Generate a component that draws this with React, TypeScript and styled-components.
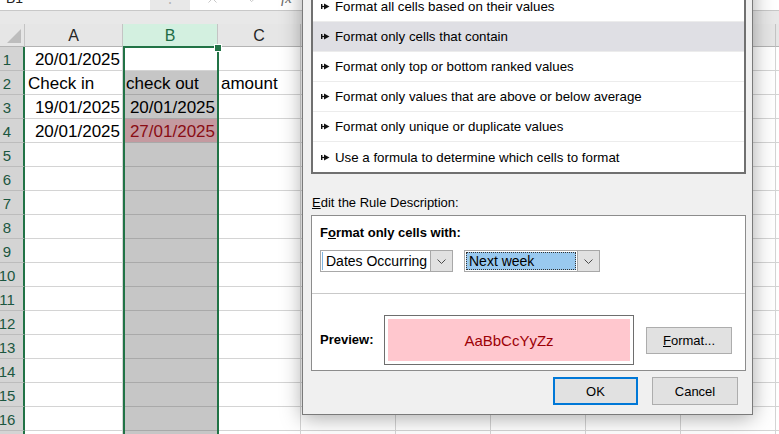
import React from "react";
import styled, { createGlobalStyle } from "styled-components";
import { X, Check } from "lucide-react";

const GlobalStyle = createGlobalStyle`
  html, body {
    margin: 0;
    padding: 0;
    overflow: hidden;
    background: #ffffff;
  }
  body {
    font-family: "Liberation Sans", Arial, sans-serif;
  }
`;

const Window = styled.div`
  position: relative;
  width: 779px;
  height: 434px;
  overflow: hidden;
  background: #e8e8e8;
`;

/* ---------- formula bar ---------- */

const FormulaBar = styled.div`
  display: flex;
  height: 24px;
  margin-top: -14px;
  border-bottom: 1px solid #c8c8c8;
  background: #e8e8e8;
`;

const NameBox = styled.div`
  width: 150px;
  display: flex;
  align-items: center;
  padding-left: 6px;
  box-sizing: border-box;
  background: #ffffff;
  font-size: 14px;
  color: #222;
`;

const Grip = styled.div`
  width: 40px;
  display: flex;
  align-items: center;
  justify-content: center;
  color: #b4b4b4;
  font-size: 14px;
`;

const FormulaInput = styled.div`
  flex: 1;
  display: flex;
  align-items: center;
  gap: 26px;
  padding-left: 15px;
  background: #ffffff;
  color: #c4c4c4;
`;

const Fx = styled.span`
  font-family: "Liberation Serif", serif;
  font-style: italic;
  font-size: 15px;
  color: #666;
  margin-left: -6px;
`;

/* ---------- sheet ---------- */

const Sheet = styled.div`
  position: relative;
  display: grid;
  grid-template-columns: 25px 98px 95px 83px repeat(6, 95px);
  grid-template-rows: 23px;
  grid-auto-rows: 24px;
  margin-top: 13px;
  font-size: 17px;
`;

const Corner = styled.div`
  position: relative;
  background: #e6e6e6;
  border-right: 1px solid #c4c4c4;
  border-bottom: 1px solid #b4b4b4;

  &::after {
    content: "";
    position: absolute;
    right: 3px;
    bottom: 3px;
    border-left: 14px solid transparent;
    border-bottom: 14px solid #bdbdbd;
  }
`;

const ColHead = styled.div<{ $active?: boolean }>`
  display: flex;
  align-items: center;
  justify-content: center;
  padding-top: 1px;
  box-sizing: border-box;
  background: ${(p) => (p.$active ? "#d3f0e0" : "#e6e6e6")};
  color: ${(p) => (p.$active ? "#1d6b45" : "#262626")};
  border-right: 1px solid #c4c4c4;
  border-bottom: 1px solid #b4b4b4;
  font-size: 16px;
`;

const RowHead = styled.div`
  display: flex;
  align-items: center;
  justify-content: center;
  padding: 2px 9px 0 0;
  box-sizing: border-box;
  background: #d4d4d4;
  color: #1b5740;
  border-right: 2px solid #217346;
  border-bottom: 1px solid #bcbcbc;
  font-size: 15px;
`;

type Tone = "plain" | "sel" | "hit";

const Cell = styled.div<{ $tone: Tone; $right?: boolean }>`
  display: flex;
  align-items: center;
  justify-content: ${(p) => (p.$right ? "flex-end" : "flex-start")};
  padding: 3px 2px 0 3px;
  box-sizing: border-box;
  white-space: nowrap;
  overflow: hidden;
  color: ${(p) => (p.$tone === "hit" ? "#8a0d14" : "#000")};
  background: ${(p) =>
    p.$tone === "sel" ? "#c6c6c6" : p.$tone === "hit" ? "#c49aa0" : "#ffffff"};
  border-right: 1px solid #d4d4d4;
  border-bottom: 1px solid
    ${(p) => (p.$tone === "plain" ? "#d4d4d4" : "#a9a9a9")};
`;

const Selection = styled.div`
  position: absolute;
  left: 123px;
  top: 22px;
  width: 96px;
  bottom: -40px;
  border: 2px solid #217346;
  box-sizing: border-box;
  pointer-events: none;

  &::after {
    content: "";
    position: absolute;
    right: -5px;
    top: -4px;
    width: 6px;
    height: 6px;
    background: #217346;
    border: 1px solid #fff;
  }
`;

/* ---------- dialog ---------- */

const Dialog = styled.div`
  position: absolute;
  left: 302px;
  top: -40px;
  width: 451px;
  box-sizing: border-box;
  padding: 29px 6px 9px 8px;
  background: #f0f0f0;
  border: 1px solid #7a7a7a;
  box-shadow: 0 3px 20px rgba(0, 0, 0, 0.34);
  font-size: 13px;
  color: #000;
`;

const RuleList = styled.div`
  display: flex;
  flex-direction: column;
  background: #ffffff;
  border: 2px solid #707070;
`;

const RuleItem = styled.div<{ $selected?: boolean }>`
  display: flex;
  align-items: center;
  gap: 5px;
  height: 30px;
  padding: 0 8px;
  box-sizing: border-box;
  background: ${(p) => (p.$selected ? "#dfdfe4" : "#ffffff")};
  border-bottom: 1px solid #ececec;
  font-size: 13.3px;

  &:last-child {
    border-bottom: none;
  }
`;

const SectionLabel = styled.div`
  margin: 21px 0 4px 1px;
  line-height: 16px;
`;

const RuleBox = styled.div`
  display: flex;
  flex-direction: column;
  background: #ffffff;
  border: 1px solid #8c8c8c;
`;

const RuleTop = styled.div`
  height: 78px;
  box-sizing: border-box;
  padding: 9px 8px 0;
  border-bottom: 1px solid #c9c9c9;
`;

const BoldLabel = styled.div<{ $width?: number }>`
  font-weight: bold;
  line-height: 16px;
  width: ${(p) => (p.$width ? `${p.$width}px` : "auto")};
`;

const ComboRow = styled.div`
  display: flex;
  gap: 11px;
  margin-top: 9px;
`;

const Combo = styled.div<{ $width: number }>`
  display: flex;
  width: ${(p) => p.$width}px;
  height: 22px;
  box-sizing: border-box;
  border: 1px solid #a8a8a8;
  background: #ffffff;
`;

const ComboText = styled.div<{ $focused?: boolean }>`
  flex: 1;
  display: flex;
  align-items: center;
  margin: 1px;
  padding-left: 3px;
  background: ${(p) => (p.$focused ? "#99c9ef" : "transparent")};
  outline: ${(p) => (p.$focused ? "1px dotted #333" : "none")};
  outline-offset: -1px;
  border-left: ${(p) => (p.$focused ? "none" : "1px solid #7fb4e0")};
  font-size: 14px;
`;

const ComboButton = styled.div`
  width: 21px;
  display: flex;
  align-items: center;
  justify-content: center;
  background: #e1e1e1;
  border-left: 1px solid #a8a8a8;
`;

const RuleBottom = styled.div`
  display: flex;
  align-items: center;
  height: 76px;
  box-sizing: border-box;
  padding: 21px 8px 5px;
`;

const Preview = styled.div`
  width: 250px;
  height: 50px;
  box-sizing: border-box;
  padding: 3px;
  border: 1px solid #6e6e6e;
  background: #ffffff;
  margin-right: 12px;
`;

const PreviewFill = styled.div`
  height: 100%;
  display: flex;
  align-items: center;
  justify-content: center;
  background: #ffc7ce;
  color: #9c0006;
  font-size: 15px;
`;

const Button = styled.button<{ $primary?: boolean; $width: number; $height: number }>`
  width: ${(p) => p.$width}px;
  height: ${(p) => p.$height}px;
  padding: 0;
  box-sizing: border-box;
  background: #e1e1e1;
  border: ${(p) => (p.$primary ? "2px solid #0078d7" : "1px solid #adadad")};
  font-family: "Liberation Sans", Arial, sans-serif;
  font-size: 13px;
  color: #000;
`;

const ButtonRow = styled.div`
  display: flex;
  justify-content: flex-end;
  gap: 14px;
  margin: 6px 8px 0 0;
`;

const RuleArrow = () => (
  <svg width="9" height="7" viewBox="0 0 9 7">
    <rect x="0" y="1" width="1.4" height="5" fill="#111" />
    <path d="M1 3.5h3" stroke="#111" strokeWidth="1.2" />
    <path d="M3 0.5L8.5 3.5L3 6.5Z" fill="#111" />
  </svg>
);

const Chevron = () => (
  <svg width="9" height="5" viewBox="0 0 9 5">
    <path d="M0.5 0.5L4.5 4.5L8.5 0.5" stroke="#4a4a4a" fill="none" />
  </svg>
);

const rules = [
  "Format all cells based on their values",
  "Format only cells that contain",
  "Format only top or bottom ranked values",
  "Format only values that are above or below average",
  "Format only unique or duplicate values",
  "Use a formula to determine which cells to format",
];

type Row = { a?: string; aRight?: boolean; b?: string; bRight?: boolean; c?: string };

const data: Row[] = [
  { a: "20/01/2025", aRight: true },
  { a: "Check in", b: "check out", c: "amount" },
  { a: "19/01/2025", aRight: true, b: "20/01/2025", bRight: true },
  { a: "20/01/2025", aRight: true, b: "27/01/2025", bRight: true },
];

const columns = ["A", "B", "C", "D", "E", "F", "G", "H", "I"];

const App = () => {
  const rows = Array.from({ length: 17 }, (_, i) => data[i] || {});

  return (
    <>
      <GlobalStyle />
      <Window>
        <FormulaBar>
          <NameBox>B1</NameBox>
          <Grip>⋮</Grip>
          <FormulaInput>
            <X size={15} strokeWidth={1.5} />
            <Check size={15} strokeWidth={1.5} />
            <Fx>fx</Fx>
          </FormulaInput>
        </FormulaBar>

        <Sheet>
          <Corner />
          {columns.map((c) => (
            <ColHead key={c} $active={c === "B"}>
              {c}
            </ColHead>
          ))}
          {rows.map((r, i) => {
            const bTone: Tone = i === 0 ? "plain" : i === 3 ? "hit" : "sel";
            return (
              <React.Fragment key={i}>
                <RowHead>{i + 1}</RowHead>
                <Cell $tone="plain" $right={r.aRight}>
                  {r.a}
                </Cell>
                <Cell $tone={bTone} $right={r.bRight}>
                  {r.b}
                </Cell>
                <Cell $tone="plain">{r.c}</Cell>
                {columns.slice(3).map((c) => (
                  <Cell key={c} $tone="plain" />
                ))}
              </React.Fragment>
            );
          })}
          <Selection />
        </Sheet>

        <Dialog>
          <RuleList>
            {rules.map((r, i) => (
              <RuleItem key={r} $selected={i === 1}>
                <RuleArrow />
                <span>{r}</span>
              </RuleItem>
            ))}
          </RuleList>

          <SectionLabel>
            <u>E</u>dit the Rule Description:
          </SectionLabel>

          <RuleBox>
            <RuleTop>
              <BoldLabel>
                F<u>o</u>rmat only cells with:
              </BoldLabel>
              <ComboRow>
                <Combo $width={133}>
                  <ComboText>Dates Occurring</ComboText>
                  <ComboButton>
                    <Chevron />
                  </ComboButton>
                </Combo>
                <Combo $width={136}>
                  <ComboText $focused>Next week</ComboText>
                  <ComboButton>
                    <Chevron />
                  </ComboButton>
                </Combo>
              </ComboRow>
            </RuleTop>
            <RuleBottom>
              <BoldLabel $width={64}>Preview:</BoldLabel>
              <Preview>
                <PreviewFill>AaBbCcYyZz</PreviewFill>
              </Preview>
              <Button $width={86} $height={27}>
                <u>F</u>ormat...
              </Button>
            </RuleBottom>
          </RuleBox>

          <ButtonRow>
            <Button $primary $width={85} $height={28}>
              OK
            </Button>
            <Button $width={86} $height={28}>
              Cancel
            </Button>
          </ButtonRow>
        </Dialog>
      </Window>
    </>
  );
};

export default App;
